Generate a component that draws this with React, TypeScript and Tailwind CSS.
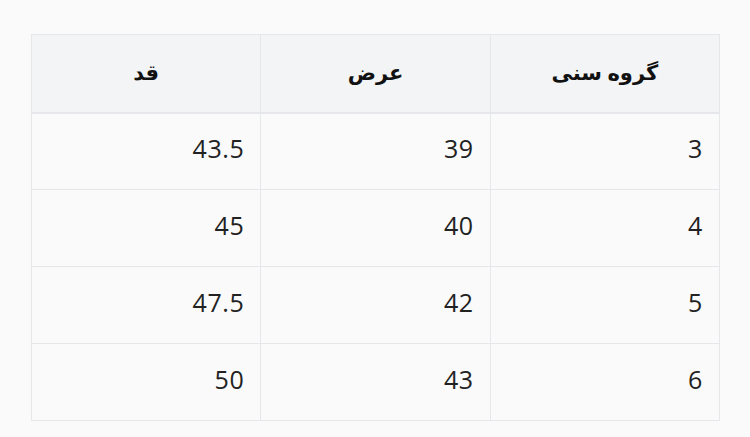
import React from "react";

const rows = [
  ["3", "39", "43.5"],
  ["4", "40", "45"],
  ["5", "42", "47.5"],
  ["6", "43", "50"],
];

export default function App() {
  return (
    <div className="w-[750px] h-[437px] bg-[#fafafa] pt-[34px] pl-[31px]" style={{ fontFamily: '"Open Sans", "Noto Sans", "DejaVu Sans", sans-serif' }}>
      <table dir="rtl" className="w-[689px] border-collapse table-fixed">
        <thead>
          <tr className="h-[78px] bg-[#f3f4f6]">
            {["گروه سنی", "عرض", "قد"].map((h) => (
              <th key={h} className="border border-[#e5e7eb] border-b-2 text-center text-[21px] font-bold text-[#111] px-4 pb-[2px]">
                {h}
              </th>
            ))}
          </tr>
        </thead>
        <tbody>
          {rows.map((r, i) => (
            <tr key={i} className="h-[77px]">
              {r.map((c, j) => (
                <td key={j} className="border border-[#e5e7eb] text-right text-[25px] tracking-[0.6px] text-[#222] px-4 pb-[5px] leading-none">
                  {c}
                </td>
              ))}
            </tr>
          ))}
        </tbody>
      </table>
    </div>
  );
}
